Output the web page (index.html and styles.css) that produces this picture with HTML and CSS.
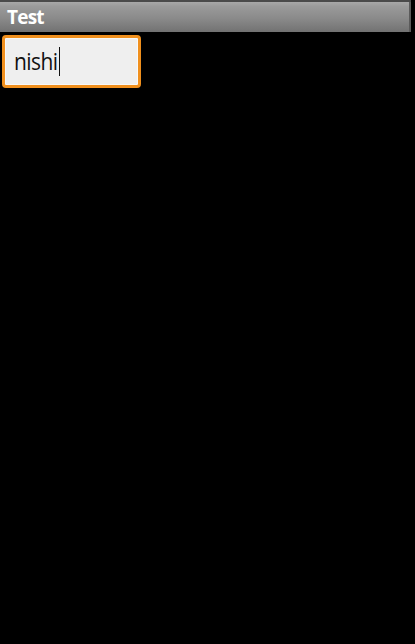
FILE: index.html
```html
<!DOCTYPE html>
<html>
<head>
<meta charset="utf-8">
<link rel="stylesheet" href="styles.css">
</head>
<body>
<div class="screen">
  <div class="titlebar"><span class="title">Test</span></div>
  <div class="content">
    <div class="field"><span class="value">nishi</span><span class="cursor"></span></div>
  </div>
</div>
</body>
</html>
```
FILE: styles.css
```css
html, body {
  margin: 0;
  padding: 0;
  background: #000;
}
.screen {
  width: 415px;
  height: 644px;
  background: #000;
  font-family: "Open Sans", "Noto Sans", "DejaVu Sans", sans-serif;
}
.titlebar {
  margin-right: 4px;
  height: 30px;
  border-top: 2px solid #4a4a4a;
  background: linear-gradient(to bottom, #a8a8a8 0%, #9a9a9a 15%, #8a8a8a 55%, #727272 100%);
  display: flex;
  align-items: center;
  padding-left: 7px;
  box-shadow: inset -2px 0 0 #5a5a5a;
}
.title {
  color: #fff;
  font-weight: bold;
  font-size: 19px;
  letter-spacing: -0.8px;
  line-height: 1;
}
.content {
  padding: 3px 0 0 2px;
}
.field {
  height: 47px;
  width: 124px;
  border: 3px solid #f0901e;
  border-radius: 4px;
  background: #efefef;
  box-shadow: inset 0 0 0 1px #f8f8f8;
  display: flex;
  align-items: center;
  padding-left: 9px;
  box-sizing: content-box;
}
.value {
  display: inline-block;
  color: #111;
  font-size: 21px;
  letter-spacing: -0.6px;
  line-height: 1;
  transform: scaleY(1.14);
  transform-origin: center;
}
.cursor {
  display: inline-block;
  width: 1px;
  height: 29px;
  background: #111;
  margin-left: 2px;
}
```
